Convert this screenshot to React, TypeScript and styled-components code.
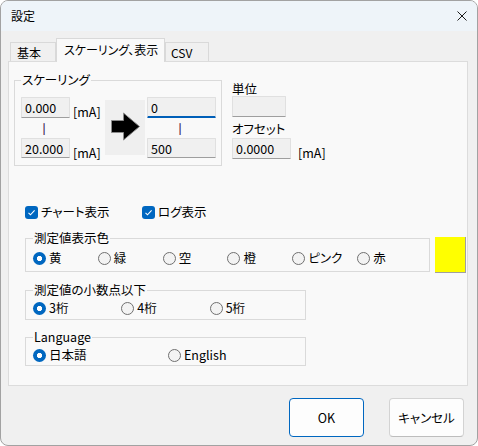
import React from "react";
import styled, { createGlobalStyle } from "styled-components";

const Global = createGlobalStyle`
  html, body { margin: 0; padding: 0; background: #ffffff; }
  body {
    font-family: "Noto Sans CJK JP", sans-serif;
    font-size: 12.5px;
    color: #000;
  }
  * { box-sizing: border-box; }
`;

const Window = styled.div`
  width: 478px;
  height: 446px;
  border: 1px solid #a2a2a2;
  border-radius: 8px;
  overflow: hidden;
  display: flex;
  flex-direction: column;
  background: #f0f0f0;
  font-feature-settings: "palt" 1;
`;

const TitleBar = styled.div`
  height: 30px;
  flex: none;
  background: #eef4f9;
  display: flex;
  align-items: center;
  justify-content: space-between;
  padding: 0 10px 0 10px;
`;

const Title = styled.span`
  font-size: 12px;
  line-height: 14px;
`;

const CloseButton = styled.span`
  display: flex;
  width: 10px;
  height: 10px;
`;

const Body = styled.div`
  flex: 1;
  display: flex;
  flex-direction: column;
  padding: 7px 9px 0 7px;
`;

const TabStrip = styled.div`
  display: flex;
  align-items: flex-end;
  height: 23px;
  padding-left: 2px;
`;

const Tab = styled.div<{ $w: number; $pl: number; $active?: boolean }>`
  width: ${(p) => p.$w}px;
  height: ${(p) => (p.$active ? 24 : 19)}px;
  margin-bottom: ${(p) => (p.$active ? -1 : 0)}px;
  padding-left: ${(p) => p.$pl}px;
  padding-bottom: ${(p) => (p.$active ? 3 : 0)}px;
  position: relative;
  z-index: ${(p) => (p.$active ? 1 : 0)};
  display: flex;
  align-items: center;
  font-size: 12px;
  line-height: 15px;
  white-space: nowrap;
  overflow: hidden;
  background: ${(p) => (p.$active ? "#f9f9f9" : "#f0f0f0")};
  border: 1px solid #d9d9d9;
  border-bottom: none;
`;

const Panel = styled.div`
  width: 460px;
  height: 325px;
  flex: none;
  background: #f9f9f9;
  border: 1px solid #dcdcdc;
  display: flex;
  flex-direction: column;
`;

const TopRow = styled.div`
  display: flex;
  align-items: flex-start;
  gap: 10px;
  margin: 11px 0 0 5px;
`;

const GroupBox = styled.fieldset<{ $w: number; $pad: string }>`
  margin: 0;
  min-width: 0;
  width: ${(p) => p.$w}px;
  padding: ${(p) => p.$pad};
  border: 1px solid #dadada;
`;

const Caption = styled.legend`
  padding: 0 1px;
  font-size: 12.5px;
  line-height: 14px;
`;

const ScaleGrid = styled.div`
  display: grid;
  grid-template-columns: 49px 35px 40px 2px 69px;
  grid-template-rows: 21px 20px 20px;
`;

const TextBox = styled.input<{ $w: number; $h?: number; $focus?: boolean }>`
  width: ${(p) => p.$w}px;
  height: ${(p) => p.$h ?? 21}px;
  margin: 0;
  padding: 0 3px;
  font-family: "Noto Sans CJK JP", sans-serif;
  font-size: 12.5px;
  color: #000;
  background: #f0f0f0;
  border: 1px solid #e0e0e0;
  border-bottom: ${(p) => (p.$focus ? "2px solid #005fb8" : "1px solid #9e9e9e")};
  border-radius: 1px;
  outline: none;
`;

const Unit = styled.span<{ $ml?: number }>`
  font-size: 12.5px;
  line-height: 16px;
  margin-top: 7px;
  margin-left: ${(p) => p.$ml ?? 3}px;
  align-self: start;
  white-space: nowrap;
`;

const Tick = styled.span<{ $w?: number }>`
  display: flex;
  justify-content: center;
  width: ${(p) => (p.$w ? `${p.$w}px` : "auto")};
  padding-right: 3px;
  font-size: 10.5px;
  font-weight: 700;
  line-height: 20px;
  color: #3a1450;
`;

const ArrowPanel = styled.div`
  grid-column: 3;
  grid-row: 1 / span 3;
  width: 40px;
  height: 55px;
  margin-top: 3px;
  background: #efefef;
  display: flex;
`;

const RightCell = styled.div<{ $row: number }>`
  grid-column: 5;
  grid-row: ${(p) => p.$row};
  display: flex;
`;

const LeftCell = styled.div<{ $row: number; $col: number }>`
  grid-column: ${(p) => p.$col};
  grid-row: ${(p) => p.$row};
  display: flex;
`;

const SideCol = styled.div`
  display: flex;
  flex-direction: column;
  align-items: flex-start;
  padding-top: 8px;
`;

const SideLabel = styled.span<{ $mt?: number }>`
  font-size: 12.5px;
  line-height: 15px;
  margin-top: ${(p) => p.$mt ?? 0}px;
`;

const OffsetRow = styled.div`
  display: flex;
  align-items: flex-start;
  margin-top: 2px;
`;

const CheckRow = styled.div`
  display: flex;
  margin: 38px 0 0 16px;
`;

const CheckItem = styled.label<{ $w?: number }>`
  display: flex;
  align-items: center;
  gap: 3px;
  width: ${(p) => (p.$w ? `${p.$w}px` : "auto")};
  line-height: 16px;
`;

const CheckBox = styled.span`
  width: 13px;
  height: 13px;
  border-radius: 3px;
  background: #0067c0;
  display: flex;
  align-items: center;
  justify-content: center;
  flex: none;
`;

const ColorRow = styled.div`
  display: flex;
  align-items: flex-start;
  gap: 5px;
  margin: 11px 0 0 16px;
`;

const Swatch = styled.div<{ $c: string }>`
  width: 31px;
  height: 36px;
  margin-top: 6px;
  background: ${(p) => p.$c};
  border-right: 1px solid #a0a0a0;
  border-bottom: 1px solid #a0a0a0;
`;

const GroupWrap = styled.div`
  margin: 10px 0 0 16px;
`;

const RadioRow = styled.div`
  display: flex;
`;

const RadioItem = styled.label<{ $w: number }>`
  display: flex;
  align-items: center;
  gap: 3px;
  width: ${(p) => p.$w}px;
  line-height: 16px;
  white-space: nowrap;
`;

const Radio = styled.input.attrs({ type: "radio" })`
  appearance: none;
  margin: 0;
  width: 13px;
  height: 13px;
  flex: none;
  border-radius: 50%;
  border: 1px solid #707070;
  background: #f3f3f3;
  &:checked {
    border: none;
    background: radial-gradient(circle, #ffffff 0 2.4px, #0067c0 2.9px);
  }
`;

const ButtonRow = styled.div`
  display: flex;
  justify-content: flex-end;
  gap: 25px;
  margin: 12px 4px 0 0;
`;

const Button = styled.button<{ $default?: boolean }>`
  width: 75px;
  height: 39px;
  margin: 0;
  padding: 0;
  border-radius: 4px;
  font-family: "Noto Sans CJK JP", sans-serif;
  font-size: 12.5px;
  color: #000;
  background: #fdfdfd;
  border: 1px solid ${(p) => (p.$default ? "#0067c0" : "#d3d3d3")};
  border-bottom-color: ${(p) => (p.$default ? "#0067c0" : "#bdbdbd")};
  font-feature-settings: "palt" 1;
`;

const colors = ["黄", "緑", "空", "橙", "ピンク", "赤"];
const decimals = ["3桁", "4桁", "5桁"];
const langs: [string, number][] = [
  ["日本語", 135],
  ["English", 100],
];

function Check() {
  return (
    <CheckBox>
      <svg width="9" height="9" viewBox="0 0 9 9">
        <polyline points="1.5,4.8 3.5,6.8 7.6,2.4" fill="none" stroke="#fff" strokeWidth="1.1" />
      </svg>
    </CheckBox>
  );
}

export default function App() {
  return (
    <>
      <Global />
      <Window>
        <TitleBar>
          <Title>設定</Title>
          <CloseButton>
            <svg width="10" height="10" viewBox="0 0 10 10">
              <path d="M0.5 0.5 L9.5 9.5 M9.5 0.5 L0.5 9.5" stroke="#1a1a1a" strokeWidth="1" fill="none" />
            </svg>
          </CloseButton>
        </TitleBar>
        <Body>
          <TabStrip>
            <Tab $w={46} $pl={6}>基本</Tab>
            <Tab $w={109} $pl={7} $active>
              スケーリング、表示
            </Tab>
            <Tab $w={44} $pl={5}>CSV</Tab>
          </TabStrip>
          <Panel>
            <TopRow>
              <GroupBox $w={208} $pad="10px 5px 7px 6px">
                <Caption>スケーリング</Caption>
                <ScaleGrid>
                  <LeftCell $row={1} $col={1}>
                    <TextBox $w={49} readOnly value="0.000" />
                  </LeftCell>
                  <LeftCell $row={1} $col={2}>
                    <Unit>[mA]</Unit>
                  </LeftCell>
                  <ArrowPanel>
                    <svg width="40" height="55" viewBox="0 0 40 55">
                      <polygon
                        points="6.5,20.5 18.5,20.5 18.5,13 34.5,26.5 18.5,40 18.5,32.5 6.5,32.5"
                        fill="#000"
                        stroke="#8a8a8a"
                        strokeWidth="1"
                      />
                    </svg>
                  </ArrowPanel>
                  <RightCell $row={1}>
                    <TextBox $w={69} $focus readOnly value="0" />
                  </RightCell>
                  <LeftCell $row={2} $col={1}>
                    <Tick $w={49}>|</Tick>
                  </LeftCell>
                  <RightCell $row={2}>
                    <Tick $w={69}>|</Tick>
                  </RightCell>
                  <LeftCell $row={3} $col={1}>
                    <TextBox $w={49} $h={20} readOnly value="20.000" />
                  </LeftCell>
                  <LeftCell $row={3} $col={2}>
                    <Unit>[mA]</Unit>
                  </LeftCell>
                  <RightCell $row={3}>
                    <TextBox $w={69} $h={20} readOnly value="500" />
                  </RightCell>
                </ScaleGrid>
              </GroupBox>
              <SideCol>
                <SideLabel>単位</SideLabel>
                <TextBox $w={54} readOnly value="" />
                <SideLabel $mt={4}>オフセット</SideLabel>
                <OffsetRow>
                  <TextBox $w={59} readOnly value="0.0000" />
                  <Unit $ml={7}>[mA]</Unit>
                </OffsetRow>
              </SideCol>
            </TopRow>

            <CheckRow>
              <CheckItem $w={117}>
                <Check />
                チャート表示
              </CheckItem>
              <CheckItem>
                <Check />
                ログ表示
              </CheckItem>
            </CheckRow>

            <ColorRow>
              <GroupBox $w={405} $pad="5px 7px 5px 7px">
                <Caption>測定値表示色</Caption>
                <RadioRow>
                  {colors.map((c, i) => (
                    <RadioItem key={c} $w={65}>
                      <Radio name="color" defaultChecked={i === 0} />
                      {c}
                    </RadioItem>
                  ))}
                </RadioRow>
              </GroupBox>
              <Swatch $c="#ffff00" />
            </ColorRow>

            <GroupWrap>
              <GroupBox $w={281} $pad="3px 7px 3px 7px">
                <Caption>測定値の小数点以下</Caption>
                <RadioRow>
                  {decimals.map((d, i) => (
                    <RadioItem key={d} $w={89.5}>
                      <Radio name="dec" defaultChecked={i === 0} />
                      {d}
                    </RadioItem>
                  ))}
                </RadioRow>
              </GroupBox>
            </GroupWrap>

            <GroupWrap>
              <GroupBox $w={281} $pad="3px 7px 2px 7px">
                <Caption>Language</Caption>
                <RadioRow>
                  {langs.map(([l, w], i) => (
                    <RadioItem key={l} $w={w}>
                      <Radio name="lang" defaultChecked={i === 0} />
                      {l}
                    </RadioItem>
                  ))}
                </RadioRow>
              </GroupBox>
            </GroupWrap>
          </Panel>
          <ButtonRow>
            <Button $default>OK</Button>
            <Button>キャンセル</Button>
          </ButtonRow>
        </Body>
      </Window>
    </>
  );
}
